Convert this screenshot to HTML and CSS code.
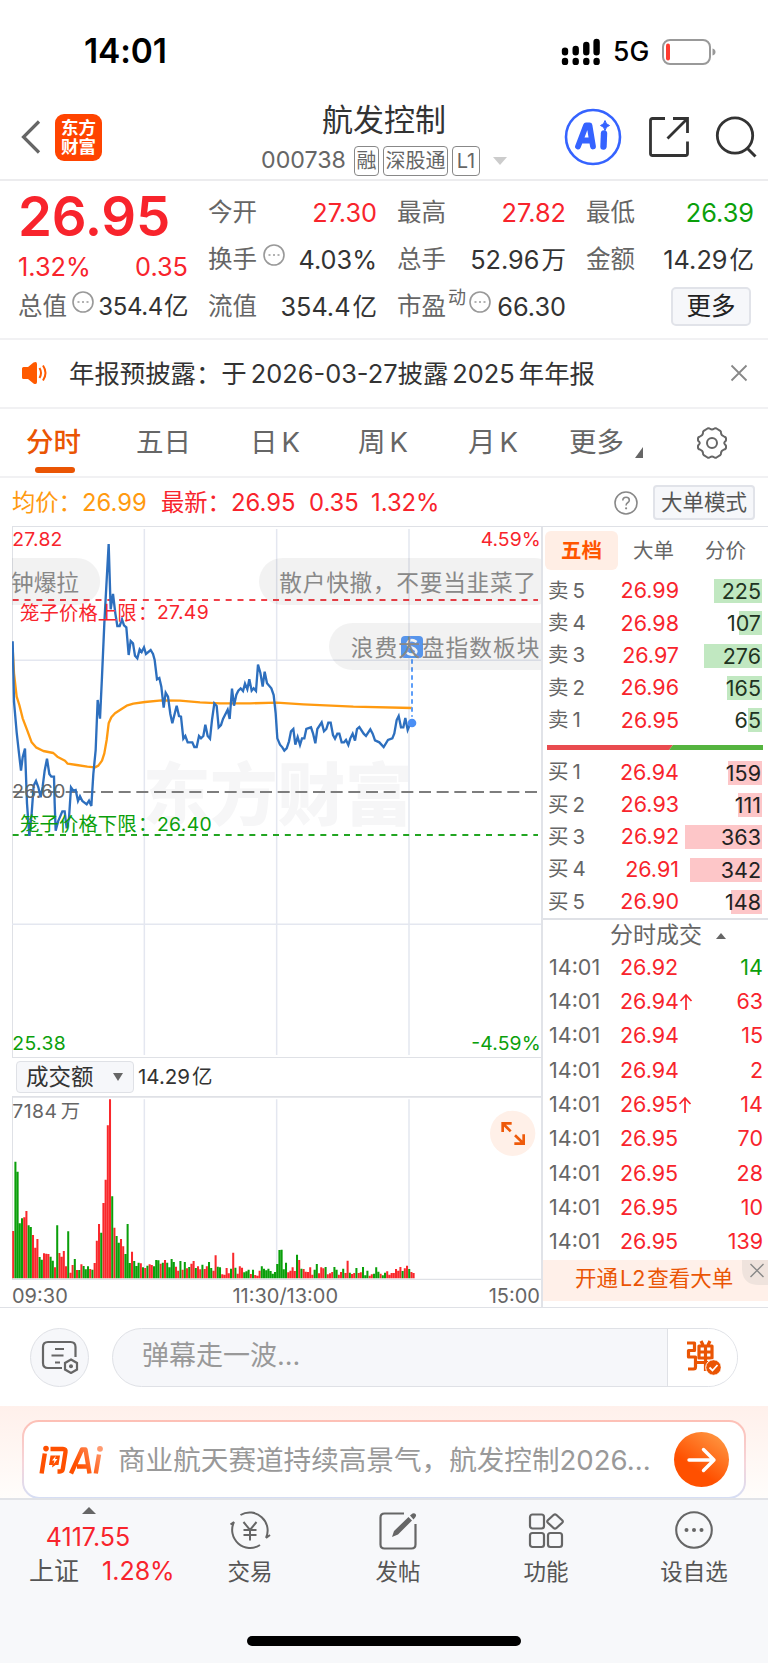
FILE: index.html
```html
<!DOCTYPE html>
<html lang="zh-CN">
<head>
<meta charset="utf-8">
<title>航发控制 000738</title>
<meta name="viewport" content="width=device-width">
<link rel="stylesheet" href="styles.css">
</head>
<body>
<div class="app">

<div class="status">
  <span class="clock">14:01</span>
  <svg class="signal" width="40" height="28" viewBox="0 0 40 28"><g stroke="#000" stroke-width="6.4" stroke-linecap="round"><path d="M4 12.600v1.600M14.700 11v3.200M25.300 7v7.200M35.600 4v10.200M4 22.900v1M14.700 22.900v1M25.300 22.900v1M35.600 22.900v1"/></g></svg>
  <span class="net">5G</span>
  <svg class="battery" width="54" height="26" viewBox="0 0 54 26"><rect x="1" y="1" width="47" height="24" rx="7" fill="none" stroke="#999" stroke-width="2"/><path d="M50.500 9.500q3 .8 3 3.500t-3 3.500z" fill="#999"/><rect x="4" y="4.500" width="4" height="17" rx="2" fill="#ff3b30"/></svg>
</div>

<header class="header">
  <div class="head-left">
    <svg width="20" height="34" viewBox="0 0 20 34"><path d="M18 1.500 2.500 17 18 32.500" fill="none" stroke="#666" stroke-width="3.200"/></svg>
    <div class="logo">东方<br>财富</div>
  </div>
  <div class="head-mid">
    <div class="name">航发控制</div>
    <div class="code-line"><span class="code">000738</span><span class="tag">融</span><span class="tag tag-wide">深股通</span><span class="tag tag-l1">L1</span><i class="drop"></i></div>
  </div>
  <div class="head-right">
    <svg width="58" height="58" viewBox="0 0 58 58"><circle cx="29" cy="29" r="27" fill="none" stroke="#3563ff" stroke-width="2.600"/><path d="M14 38.500 22 17.500h3.500l3.500 21M17.500 32.500h9" fill="none" stroke="#3563ff" stroke-width="5.800" stroke-linejoin="round" stroke-linecap="round"/><path d="M40 25.500 39.500 38.500" stroke="#3563ff" stroke-width="6.400" stroke-linecap="round"/><path d="M41 12.500q.8 4 4.500 5-3.700 1-4.500 5-.8-4-4.500-5 3.700-1 4.500-5z" fill="#3563ff" stroke="#3563ff"/></svg>
    <svg class="share" width="42" height="42" viewBox="0 0 42 42"><path d="M17 2.500H4.500q-2 0-2 2v33q0 2 2 2h33q2 0 2-2V25.500M25 2.500h14.500V17M39 3 19.500 22.500" fill="none" stroke="#333" stroke-width="2.800"/></svg>
    <svg width="42" height="42" viewBox="0 0 42 42"><circle cx="20" cy="19.500" r="17.700" fill="none" stroke="#333" stroke-width="2.800"/><path d="m32.500 32.500 8 8" stroke="#333" stroke-width="3"/></svg>
  </div>
</header>

<section class="quote">
  <div class="qcol">
    <div class="price">26.95</div>
    <div class="qchange red"><span>1.32%</span><span>0.35</span></div>
    <div class="qrow"><span class="lab">总值</span><svg class="info" viewBox="0 0 22 22"><circle cx="11" cy="11" r="10"/><path d="M5.500 11h2M10 11h2M14.500 11h2"/></svg><b class="small">354.4<em>亿</em></b></div>
  </div>
  <div class="qcol">
    <div class="qrow"><span class="lab">今开</span><b class="red">27.30</b></div>
    <div class="qrow"><span class="lab">换手</span><svg class="info info-gap" viewBox="0 0 22 22"><circle cx="11" cy="11" r="10"/><path d="M5.500 11h2M10 11h2M14.500 11h2"/></svg><b>4.03%</b></div>
    <div class="qrow"><span class="lab">流值</span><b>354.4<em>亿</em></b></div>
  </div>
  <div class="qcol">
    <div class="qrow"><span class="lab">最高</span><b class="red">27.82</b></div>
    <div class="qrow"><span class="lab">总手</span><b>52.96<em>万</em></b></div>
    <div class="qrow"><span class="lab">市盈</span><span class="dyn">动</span><svg class="info info-tight" viewBox="0 0 22 22"><circle cx="11" cy="11" r="10"/><path d="M5.500 11h2M10 11h2M14.500 11h2"/></svg><b>66.30</b></div>
  </div>
  <div class="qcol">
    <div class="qrow"><span class="lab">最低</span><b class="green">26.39</b></div>
    <div class="qrow"><span class="lab">金额</span><b>14.29<em>亿</em></b></div>
    <div class="qrow"><span class="more-btn">更多</span></div>
  </div>
</section>

<div class="notice">
  <svg width="28" height="24" viewBox="0 0 28 24"><path d="M1 7.500q0-1.500 1.500-1.500H7l5.500-4.500Q16 0 16 3v18q0 3-3.500 1.500L7 18H2.500Q1 18 1 16.500z" fill="#ff5a00"/><path d="M18.500 7q3 5 0 10M22 4.500q5 7.500 0 15" fill="none" stroke="#ff5a00" stroke-width="2"/></svg>
  <span class="notice-text">年报预披露：于<i class="gap"></i>2026-03-27披露<i class="gap"></i>2025<i class="gap"></i>年年报</span>
  <svg width="18" height="18" viewBox="0 0 18 18"><path d="m1.500 1.500 15 15m0-15-15 15" stroke="#888" stroke-width="1.800"/></svg>
</div>

<nav class="tabs">
  <span class="on">分时</span><span>五日</span><span>日<i class="gap"></i>K</span><span>周<i class="gap"></i>K</span><span>月<i class="gap"></i>K</span><span class="tab-more">更多<svg width="8" height="11" viewBox="0 0 8 11"><path d="M8 0v11H0z" fill="#666"/></svg></span>
  <svg width="34" height="34" viewBox="0 0 34 34"><path d="M12.500 2.500q1.500-.8 2.500.3 2 1.400 4 0 1-1.100 2.500-.3l3.700 2.300q1 .8.800 2.200.3 2.600 2.900 3.400 2.100.4 2.100 2.100v1.700q-.2 1-1.200 1.500-1.200 1.300 0 2.600 1 .6 1.200 1.500v1.700q0 1.700-2.100 2.100-2.600.8-2.900 3.400.2 1.400-.8 2.200l-3.700 2.300q-1.500.8-2.500-.3-2-1.400-4 0-1 1.100-2.500.3l-3.700-2.300q-1-.8-.8-2.200-.3-2.600-2.900-3.400Q3 23.200 3 21.500v-1.700q.2-.9 1.200-1.500 1.200-1.300 0-2.600-1-.5-1.200-1.500v-1.700q0-1.700 2.100-2.100Q7.700 9.600 8 7q-.2-1.400.8-2.200z" fill="none" stroke="#666" stroke-width="2"/><circle cx="17" cy="17" r="5" fill="none" stroke="#666" stroke-width="2"/></svg>
</nav>

<div class="legend">
  <span class="orange l1">均价：</span><span class="orange v1">26.99</span>
  <span class="red l2">最新：</span><span class="red v2">26.95</span><span class="red v3">0.35</span><span class="red v4">1.32%</span>
  <svg class="help" width="24" height="24" viewBox="0 0 24 24"><circle cx="12" cy="12" r="11" fill="none" stroke="#888" stroke-width="1.600"/><path d="M8.800 9.600q0-3.300 3.300-3.300 3.200 0 3.200 2.900 0 1.500-1.700 2.500-1.500.9-1.500 2.700" fill="none" stroke="#888" stroke-width="1.600"/><circle cx="12.100" cy="17.300" r="1.100" fill="#888"/></svg>
  <span class="mode">大单模式</span>
</div>

<main class="board">
  <section class="charts">
    <svg class="trend" width="530" height="532" viewBox="36 18 1590 1596">
      <g fill="#f6f6f7" class="wm"><text x="428" y="900" textLength="810">东方财富</text></g>
      <path d="M36 19.500h1590M36 1612.500h1590" stroke="#dfe1e6" stroke-width="3"/>
      <path d="M37.500 18v1596" stroke="#dfe1e6" stroke-width="3"/>
      <path d="M433 27v1578M830 27v1578M1227 27v1578M36 421h1590M36 1213h1590" stroke="#e4e7f0" stroke-width="4.500"/>
      <path d="M38 816H1614" stroke="#7d7d7d" stroke-width="6.500" stroke-dasharray="36 17"/>
      <path d="M38 240H1614" stroke="#f04048" stroke-width="6.500" stroke-dasharray="18 17.500"/>
      <path d="M38 945H1614" stroke="#22a522" stroke-width="6.500" stroke-dasharray="18 17.500"/>
      <path d="M38 385 42 460 50 530 58 555 68 595 82 632 95 667 108 682 130 693 160 699 172 710 195 722 203 731 230 735 262 740 285 742 295 737 306 722 313 700 320 660 326 610 334 592 345 580 360 570 380 557 400 551 435 546 485 541 540 542 600 547 660 550 750 550 830 548 910 553 1060 560 1236 564" fill="none" stroke="#ff9a10" stroke-width="7" stroke-linejoin="round"/>
      <path d="M38 364 42 545 50 637 57 700 63 752 68 712 75 686 81 850 88 948 95 880 101 797 108 783 115 802 122 832 128 800 134 752 141 716 148 762 154 770 162 770 164 850 167 932 174 905 187 874 194 874 200 925 207 895 213 802 220 812 227 810 234 843 240 829 247 843 260 853 267 842 274 858 280 762 287 690 293 540 300 596 306 470 313 310 320 180 326 72 332 268 339 222 346 280 352 318 359 318 366 298 372 316 379 322 386 405 392 363 399 370 405 407 412 415 419 388 425 396 432 382 438 402 452 390 459 402 464 420 471 478 478 474 484 500 491 563 497 518 504 530 511 582 517 610 530 557 537 588 543 590 550 656 556 648 563 667 577 667 583 681 590 681 597 648 603 655 610 648 616 614 623 648 630 656 636 600 643 550 650 558 656 622 663 615 669 597 683 569 689 597 696 506 702 557 709 524 715 512 722 505 729 513 735 491 742 508 748 478 755 512 761 505 768 513 774 434 781 458 788 500 794 455 801 490 814 505 821 525 827 580 832 655 840 674 847 682 853 692 860 685 867 664 873 634 880 627 886 674 893 651 900 675 906 655 913 655 919 627 933 622 939 640 946 670 952 627 965 607 972 634 979 627 985 608 992 608 999 645 1005 656 1012 641 1018 641 1025 667 1032 667 1038 660 1045 675 1051 655 1058 641 1065 662 1071 627 1078 621 1091 641 1098 648 1111 628 1118 641 1125 661 1138 667 1151 681 1164 660 1177 655 1183 640 1190 600 1196 588 1203 622 1210 622 1216 594 1223 630 1229 615 1236 609" fill="none" stroke="#2d6fbe" stroke-width="7"/>
      <rect x="1203" y="348" width="66" height="66" rx="12" fill="#5c9df8"/>
      <path d="M1250 366q-14-10-24-2-8 9 4 16l14 7q10 8 0 15-14 6-24-5" fill="none" stroke="#fff" stroke-width="8"/>
      <path d="M1236 418V590" stroke="#5c9df8" stroke-width="6" stroke-dasharray="13 11"/>
      <circle cx="1236" cy="609" r="13" fill="#4a8ff5"/>
      <g fill="#000" fill-opacity=".05"><path d="M36 114H230a70 70 0 0 1 0 141H36z"/><rect x="777" y="114" width="896" height="141" rx="70"/><rect x="987" y="309" width="900" height="141" rx="70"/></g>
      <g class="danmu"><text x="33" y="212" textLength="204">钟爆拉</text><text x="838" y="212" textLength="770">散户快撤，不要当韭菜了</text><text x="1052" y="408" textLength="637">浪费大盘指数板块拉</text></g>
      <g class="ctext">
        <text x="37" y="77" textLength="150" fill="#f8242c">27.82</text>
        <text x="1442" y="77" textLength="180" fill="#f8242c">4.59%</text>
        <text x="60" y="299" textLength="350" fill="#f8242c">笼子价格上限</text><text x="414" y="299" fill="#f8242c">：</text><text x="471" y="297" textLength="155" fill="#f8242c">27.49</text>
        <text x="60" y="934" textLength="350" fill="#0b9f0b">笼子价格下限</text><text x="414" y="934" fill="#0b9f0b">：</text><text x="471" y="932" textLength="164" fill="#0b9f0b">26.40</text>
        <text x="37" y="834" textLength="159" fill="#666">26.60</text>
        <text x="37" y="1590" textLength="160" fill="#0b9f0b">25.38</text>
        <text x="1414" y="1590" textLength="208" fill="#0b9f0b">-4.59%</text>
      </g>
    </svg>
    <div class="vol-head"><span class="select">成交额<i class="tri-down"></i></span><span class="vol-val">14.29<i class="gap gap-s"></i>亿</span></div>
    <svg class="volume" width="530" height="184" viewBox="36 196 1590 552">
      <path d="M36 198.500h1590M36 746.500h1590" stroke="#dfe1e6" stroke-width="5"/>
      <path d="M37.500 198v548" stroke="#dfe1e6" stroke-width="3"/>
      <path d="M433 206v537M830 206v537M1227 206v537" stroke="#e4e7f0" stroke-width="4.500"/>
      <path id="bars-up" fill="#f9282c"/><path id="bars-down" fill="#0a9f0a"/>
      <circle cx="1538" cy="308" r="68" fill="#fff0e8"/>
      <path d="M1508 304V278h27M1510 280l22 22M1571 311v28h-28M1569 337l-24-23" fill="none" stroke="#ee5a0a" stroke-width="8"/>
      <g class="ctext"><text x="37" y="262" textLength="134" fill="#666">7184</text><text x="182" y="262" fill="#666">万</text></g>
    </svg>
    <div class="axis"><span>09:30</span><span class="ax-mid">11:30/13:00</span><span>15:00</span></div>
  </section>

  <aside class="side">
    <div class="side-tabs"><span class="sel">五档</span><span>大单</span><span>分价</span></div>
    <div class="book sell">
      <div><span>卖<i class="gap"></i>5</span><b>26.99</b><em style="--w:48px">225</em></div>
      <div><span>卖<i class="gap"></i>4</span><b>26.98</b><em style="--w:23px">107</em></div>
      <div><span>卖<i class="gap"></i>3</span><b>26.97</b><em style="--w:58px">276</em></div>
      <div><span>卖<i class="gap"></i>2</span><b>26.96</b><em style="--w:35px">165</em></div>
      <div><span>卖<i class="gap"></i>1</span><b>26.95</b><em style="--w:14px">65</em></div>
    </div>
    <svg class="ratio" width="216" height="5" viewBox="0 0 216 5"><path d="M0 0h126l-4 5H0z" fill="#e94b4f"/><path d="M126 0h90v5h-94z" fill="#55b43f"/></svg>
    <div class="book buy">
      <div><span>买<i class="gap"></i>1</span><b>26.94</b><em style="--w:34px">159</em></div>
      <div><span>买<i class="gap"></i>2</span><b>26.93</b><em style="--w:24px">111</em></div>
      <div><span>买<i class="gap"></i>3</span><b>26.92</b><em style="--w:77px">363</em></div>
      <div><span>买<i class="gap"></i>4</span><b>26.91</b><em style="--w:72px">342</em></div>
      <div><span>买<i class="gap"></i>5</span><b>26.90</b><em style="--w:31px">148</em></div>
    </div>
    <div class="deals-head">分时成交<i class="tri-up"></i></div>
    <div class="deals">
      <div><span>14:01</span><b>26.92</b><em class="green">14</em></div>
      <div><span>14:01</span><b>26.94<svg class="up" viewBox="0 0 14 18"><path d="M7 17V2M1.500 8 7 2l5.500 6"/></svg></b><em>63</em></div>
      <div><span>14:01</span><b>26.94</b><em>15</em></div>
      <div><span>14:01</span><b>26.94</b><em>2</em></div>
      <div><span>14:01</span><b>26.95<svg class="up" viewBox="0 0 14 18"><path d="M7 17V2M1.500 8 7 2l5.500 6"/></svg></b><em>14</em></div>
      <div><span>14:01</span><b>26.95</b><em>70</em></div>
      <div><span>14:01</span><b>26.95</b><em>28</em></div>
      <div><span>14:01</span><b>26.95</b><em>10</em></div>
      <div><span>14:01</span><b>26.95</b><em>139</em></div>
    </div>
    <div class="promo"><span>开通<i class="gap gap-s"></i>L2<i class="gap gap-s"></i>查看大单</span><svg class="promo-x" width="26" height="25" viewBox="0 0 26 25"><path d="M0 0h26v25H17Q0 25 0 8z" fill="#efe3dd"/><path d="m8.500 4 13 13m0-13-13 13" stroke="#888" stroke-width="1.400"/></svg></div>
  </aside>
</main>

<div class="chat">
  <span class="chat-set"><svg width="38" height="34" viewBox="0 0 38 34"><g fill="none" stroke="#666" stroke-width="2.200"><path d="M34.500 17V7q0-5-5-5H7Q2 2 2 7v16q0 5 5 5h14"/><path d="M14 9h9M10.500 15.500h12M14 22.500h5"/><path d="m30 19.500 6 3.500v6.500L30 33l-6-3.500V23z"/></g><circle cx="30" cy="26.300" r="2" fill="#666"/></svg></span>
  <div class="chat-box"><span class="chat-ph">弹幕走一波...</span><span class="chat-dan"><svg width="36" height="36" viewBox="0 0 36 36"><g fill="none" stroke="#ea5504" stroke-width="3.200" stroke-linejoin="round"><path d="M2 3h7.500v7.500H3.500V17h7v10q0 2-2 2H3M16 1l2 4M25 1l-2 4M14 6h13v12H14zM14 12h13M12 22.500h17M20.500 6v25"/></g><circle cx="28.500" cy="27.500" r="7.800" fill="#ea5504" stroke="#fff"/><path d="m24.500 27.500 3 3 5-5.500" fill="none" stroke="#fff" stroke-width="1.800"/></svg></span></div>
</div>

<div class="ask">
  <div class="ask-card">
    <svg width="65" height="30" viewBox="0 0 65 30"><defs><linearGradient id="ag" gradientUnits="userSpaceOnUse" x1="30" y1="30" x2="64" y2="2"><stop offset=".3" stop-color="#ff5000"/><stop offset="1" stop-color="#ff9f78"/></linearGradient></defs><g fill="none" stroke="url(#ag)" stroke-width="4.400"><path d="M5.800 8.500 2.600 28.500M11.500 4h12.500q3 0 2.500 3l-2.700 17q-.4 2.500-2.800 2.500H18.500"/><path stroke-linejoin="round" d="M32 28.500 43 4.500h3.500L50.500 28.500M38 21.500h11M60 9.500 56.800 28.500"/></g><path d="M11.500 10.500h9.500l-1.500 9.500h-3l-3.500 2.500.5-2.500h-3.500z" fill="#ff5000"/><path d="m16.800 11-3.800 4.500h2.500l-1 3.500 4-5H16z" fill="#fff"/><circle cx="7" cy="3.600" r="2.800" fill="#ff5000"/><circle cx="61" cy="3.800" r="2.900" fill="#ff9a70"/></svg>
    <span class="ask-text">商业航天赛道持续高景气，航发控制2026...</span>
    <span class="go"><svg width="30" height="26" viewBox="0 0 30 26"><path d="M2 13h25M16.500 2.500 27 13 16.500 23.500" fill="none" stroke="#fff" stroke-width="3.400" stroke-linecap="round" stroke-linejoin="round"/></svg></span>
  </div>
</div>

<footer class="bottom">
  <div class="index"><i class="tri-up big"></i><span class="idx">4117.55</span><span class="idx-row"><span>上证</span><span class="red">1.28%</span></span></div>
  <div class="nav"><svg width="44" height="40" viewBox="0 0 44 40"><g fill="none" stroke="#666" stroke-width="2"><path d="M12.500 5A18 18 0 0 1 38 28M32 35A18 18 0 0 1 6 12l-3.500 2.500M38 28l4-3M15.500 12l6.500 8 6.500-8M22 20v10.500M15.500 20h13M15.500 25h13"/></g></svg><span>交易</span></div>
  <div class="nav"><svg width="40" height="40" viewBox="0 0 40 40"><path d="M26 3.500H6.500q-4 0-4 4v27q0 4 4 4h27q4 0 4-4V14" fill="none" stroke="#666" stroke-width="2.200"/><path d="m14 27 2-6L30.500 7l3.500 3.500L20 24.500zM32 5.500l2.500-2q2-.8 3 .5 1.200 1.200 0 3l-2 2.500z" fill="#666"/></svg><span>发帖</span></div>
  <div class="nav"><svg width="40" height="40" viewBox="0 0 40 40"><g fill="none" stroke="#666" stroke-width="2.200"><rect x="4" y="4.500" width="14" height="14" rx="2.500"/><rect x="4" y="23" width="14" height="14" rx="2.500"/><rect x="22" y="23" width="14" height="14" rx="2.500"/><path d="M27.800 4.800q1.200-1 2.400 0l6 5.500q1.200 1.200 0 2.400l-6 5.500q-1.200 1-2.400 0l-6-5.500q-1.200-1.200 0-2.400z"/></g></svg><span>功能</span></div>
  <div class="nav"><svg width="40" height="40" viewBox="0 0 40 40"><circle cx="20" cy="20" r="17.800" fill="none" stroke="#666" stroke-width="2.100"/><g fill="#666"><circle cx="12.500" cy="20" r="2"/><circle cx="20" cy="20" r="2"/><circle cx="27.500" cy="20" r="2"/></g></svg><span>设自选</span></div>
  <div class="home"></div>
</footer>

</div>
<script src="chart.js"></script>
</body>
</html>
```
FILE: styles.css
```css
* { box-sizing: border-box; }
body { margin: 0; background: #fff; font-family: Inter, "Noto Sans CJK SC", sans-serif; color: #333; line-height: 1; }
b, em, i { font-weight: 400; font-style: normal; }
svg { display: block; flex: none; }
span, b, em { white-space: nowrap; }
.app { width: 768px; height: 1663px; overflow: hidden; display: flex; flex-direction: column; }
.red { color: #f8242c; }
.green { color: #0b9f0b; }
.orange { color: #ff9a10; }
.gap { display: inline-block; width: 4px; }
.gap-s { width: 2px; }

.status { height: 100px; flex: none; display: flex; align-items: center; padding: 3px 52px 0 84px; color: #000; }
.clock { font-size: 33.500px; font-weight: 600; letter-spacing: -.1px; flex: 1; }
.signal { margin-right: 12px; }
.net { font-size: 26.500px; font-weight: 500; width: 49px; }

.header { height: 81px; flex: none; display: grid; grid-template-columns: 227px 1fr 227px; border-bottom: 2px solid #ececee; padding: 0 12px 0 21px; }
.head-left { display: flex; align-items: center; gap: 14px; padding-bottom: 8px; }
.logo { width: 47px; height: 47px; border-radius: 9px; background: #ff4400; color: #fff; font-size: 17.500px; line-height: 19px; font-weight: 700; text-align: center; padding-top: 4px; }
.head-mid { display: flex; flex-direction: column; align-items: center; padding-right: 9px; }
.name { font-size: 31px; line-height: 40px; }
.code-line { display: flex; align-items: center; height: 42px; color: #666; font-size: 23.200px; }
.code { width: 93px; }
.tag { height: 30px; width: 25px; border: 1.500px solid #888; border-radius: 4px; font-size: 20px; display: flex; align-items: center; justify-content: center; margin-right: 4px; }
.tag-wide { width: 65px; }
.tag-l1 { width: 28px; margin-right: 13px; }
.drop { border: 7px solid transparent; border-top: 8px solid #ccc; border-bottom: 0; }
.head-right { display: flex; align-items: center; justify-content: flex-end; padding: 0 0 9px; gap: 25.500px; margin-right: -1px; }

.quote { height: 159px; flex: none; display: grid; grid-template-columns: 170px 169px 169px 168px; gap: 20px; padding: 8px 0 0 18px; border-bottom: 2px solid #f1f1f3; font-size: 24.500px; }
.qrow { height: 47px; display: flex; align-items: center; }
.lab { color: #666; }
.qrow b { margin-left: auto; font-size: 25.300px; }
.qrow em { margin-left: 2px; font-size: 24.500px; }
.qrow .small { font-size: 24px; letter-spacing: -.4px; }
.small em { margin-left: 1px; }
.price { height: 54px; line-height: 54px; font-size: 54.500px; font-weight: 600; color: #f8242c; letter-spacing: -.2px; }
.qchange { height: 40px; padding-top: 11px; display: flex; justify-content: space-between; font-size: 25.300px; }
.info { width: 22px; height: 22px; fill: none; stroke: #999; stroke-width: 1.600; margin: 0 0 9px 5px; }
.info-gap { margin-left: 6px; }
.info-tight { margin-left: 3px; }
.dyn { font-size: 18px; color: #666; margin: 0 0 17px 2px; }
.more-btn { margin-left: auto; margin-right: 3px; width: 80px; height: 39px; border: 2px solid #e1e3e9; border-radius: 5px; background: #f6f7fa; display: flex; align-items: center; justify-content: center; color: #222; }

.notice { height: 69px; flex: none; display: flex; align-items: center; padding: 0 20px 1px 21px; border-bottom: 2px solid #f1f1f3; }
.notice-text { font-size: 25.400px; margin-left: 20px; flex: 1; padding-top: 1px; }

.tabs { height: 69px; flex: none; display: grid; grid-template-columns: 110px 114px 108px 110px 101px 126px auto; padding-left: 26px; border-bottom: 2px solid #f1f1f3; font-size: 27.500px; color: #666; align-items: center; }
.tabs > span { height: 67px; line-height: 67px; }
.on { color: #ea5504; font-weight: 500; position: relative; }
.on::after { content: ""; position: absolute; left: 9px; bottom: 3px; width: 40px; height: 6.500px; border-radius: 3px; background: #ea5504; }
.tab-more { display: flex; align-items: center; gap: 11px; }
.tab-more svg { margin-top: 19px; }

.legend { height: 48px; flex: none; display: flex; align-items: center; font-size: 23.800px; padding: 1px 13px 0 12px; }
.l1, .l2 { font-size: 23.300px; width: 70px; }
.v1 { width: 79px; } .v2 { width: 78px; } .v3 { width: 62px; } .v4 { flex: 1; }
.help { margin-right: 15px; }
.mode { width: 102px; height: 35px; border: 2px solid #e1e3e9; border-radius: 4px; background: #f6f7fa; font-size: 21.500px; color: #555; display: flex; align-items: center; justify-content: center; }

.board { height: 782px; flex: none; display: grid; grid-template-columns: 541px 1fr; border-bottom: 1px solid #dfe1e6; }
.charts { padding-left: 12px; }
.trend { overflow: hidden; }
.ctext { font-size: 58px; }
.danmu { font-size: 68px; fill: #888; }
.wm { font-size: 203px; font-weight: 900; }
.vol-head { height: 38px; display: flex; align-items: center; font-size: 20.500px; padding-left: 4px; }
.select { width: 118px; height: 32px; border: 1.500px solid #dfe1e6; border-radius: 4px; background: #f6f7fa; font-size: 22.500px; display: flex; align-items: center; padding-left: 9px; margin-right: 4px; }
.tri-down { border: 5px solid transparent; border-top: 8px solid #666; border-bottom: 0; margin-left: 19px; }
.axis { height: 27px; display: flex; justify-content: space-between; align-items: center; font-size: 20px; color: #666; padding: 4px 1px 0 0; }
.ax-mid { padding-left: 14px; }

.side { border-left: 2px solid #e1e3e8; border-top: 1px solid #dfe1e6; display: flex; flex-direction: column; font-size: 21.500px; }
.side-tabs { height: 48px; display: grid; grid-template-columns: 73px 71px 73px; padding: 4px 0 0 2px; color: #666; font-size: 20.500px; }
.side-tabs span { height: 39px; line-height: 39px; text-align: center; border-radius: 6px; }
.side-tabs .sel { background: #ffeee5; color: #ff5500; font-weight: 600; }
.book > div { height: 32.300px; display: grid; grid-template-columns: 54px 77px 83px; align-items: center; padding-left: 5px; }
.book span { color: #666; font-size: 20.500px; }
.book b { color: #f8242c; text-align: right; }
.book em { height: 24px; line-height: 25px; text-align: right; padding-right: 1px; color: #222; background: linear-gradient(var(--bar), var(--bar)) right / var(--w) 100% no-repeat; }
.sell { --bar: #c1e8c1; }
.sell em { color: #232; }
.buy { --bar: #fdc6c8; }
.ratio { margin: 9px 0 6px 4px; }
.buy { border-bottom: 2px solid #dfe1e6; height: 164px; }
.deals-head { height: 31px; display: flex; align-items: center; padding-left: 67px; font-size: 23px; color: #666; }
.tri-up { border: 5px solid transparent; border-bottom: 6px solid #666; border-top: 0; margin-left: 14px; }
.deals { margin-top: -1px; }
.deals > div { height: 34.300px; display: grid; grid-template-columns: 71px 90px 1fr; align-items: center; padding: 0 5px 0 6px; }
.deals span { color: #666; }
.deals b { color: #f8242c; display: flex; align-items: center; }
.deals em { text-align: right; color: #f8242c; }
.deals .green { color: #0b9f0b; }
.up { width: 14px; height: 18px; fill: none; stroke: #f8242c; stroke-width: 1.700; }
.promo { height: 41px; margin-top: 1px; background: #fff0e9; color: #ea5504; font-size: 21.500px; display: flex; justify-content: space-between; }
.promo span { line-height: 37px; padding-left: 32px; }

.chat { height: 98px; flex: none; display: flex; align-items: center; padding: 0 30px; gap: 23px; }
.chat-set { width: 59px; height: 59px; border: 1.500px solid #dfe1e6; border-radius: 50%; background: #f6f7fa; display: flex; align-items: center; justify-content: center; flex: none; }
.chat-box { width: 626px; height: 59px; border: 1.500px solid #dfe1e6; border-radius: 30px; background: #f6f7fa; display: flex; overflow: hidden; }
.chat-ph { flex: 1; padding-left: 29px; font-size: 27px; line-height: 53px; color: #999; }
.chat-dan { width: 70px; background: #fff; border-left: 1.500px solid #dfe1e6; display: flex; align-items: center; padding: 2px 0 0 17px; }

.ask { height: 92px; flex: none; background: linear-gradient(#fff0eb, #fffdfb); padding: 14px 22px 0; }
.ask-card { height: 79px; border: 2.500px solid transparent; border-radius: 17px; background: linear-gradient(#fff, #fff) padding-box, linear-gradient(#fdbfb5, #f6d5da 55%, #d5def5) border-box; display: flex; align-items: center; padding: 0 15px; }
.ask-text { font-size: 27.600px; color: #999; margin-left: 14px; flex: 1; padding-top: 2px; }
.go { width: 55px; height: 55px; border-radius: 50%; background: linear-gradient(215deg, #ff9540 10%, #ff5000 65%); display: flex; align-items: center; justify-content: center; }

.bottom { flex: 1; background: #f7f8fa; border-top: 2px solid #e1e3e8; display: grid; grid-template-columns: 176px repeat(4, 148px); grid-template-rows: 136px 10px; }
.index { display: flex; flex-direction: column; align-items: center; padding-top: 7px; font-size: 25px; }
.big { border-width: 0 7px 7px; margin-left: 2px; }
.idx { color: #f8242c; margin-top: 11px; }
.idx-row { display: flex; gap: 23px; margin: 9px 0 0 29px; align-self: flex-start; color: #555; }
.nav { display: flex; flex-direction: column; align-items: center; gap: 11px; padding-top: 10px; font-size: 22.500px; color: #555; }
.home { grid-column: 1 / -1; justify-self: center; width: 274px; height: 10px; border-radius: 5px; background: #000; }
```
FILE: chart.js
```javascript
// Turnover per minute: r = up, g = down, followed by the bar height.
const turnover = `r142 g350 g320 g165 g180 r183 r202 g159 g154 r130 r92 r118 g64 g56 r75 r74 r73 g65 g53 r33
g159 r76 r65 r82 r36 g141 r17 r40 g58 r25 g25 r42 g37 g27 g36 r28 g26 r46 r113 r163
g137 r226 r296 r459 r537 g246 r152 g127 g107 r118 r96 g73 g163 g46 r80 g52 g37 g47 r45 g33
r31 g38 r42 r40 g36 g55 g54 r44 g47 r55 g47 g33 g58 g49 r35 r23 g52 r26 g49 r30
g34 r44 r52 g31 r36 r27 g41 r28 r36 g49 g31 r23 r69 g35 g33 r12 r11 r31 r15 g29
r77 g32 r14 r36 r32 g18 g21 g26 r13 g26 r10 r8 r23 g36 g29 g24 g29 g22 g14 g19
g43 g85 g86 g27 g47 r18 r23 r33 r22 g71 r55 g29 r28 r20 r19 r33 r11 g26 g43 r15
r33 r30 g34 r12 r15 r19 g34 g26 r11 r19 g29 r16 r53 g17 r13 r16 g31 r16 r18 g34
g9 g23 r8 r12 g14 g33 g20 r14 g9 g17 r21 r11 r16 r16 r28 r23 r34 g22 r30 r38
g28 r19 r16`.split(/\s+/);
const paths = { r: "", g: "" };
turnover.forEach((item, i) => {
  const h = +item.slice(1);
  paths[item[0]] += `M${(36.6 + i * 6.6).toFixed(1)} 743v${-h}h6.1v${h}z`;
});
document.getElementById("bars-up").setAttribute("d", paths.r);
document.getElementById("bars-down").setAttribute("d", paths.g);
```
